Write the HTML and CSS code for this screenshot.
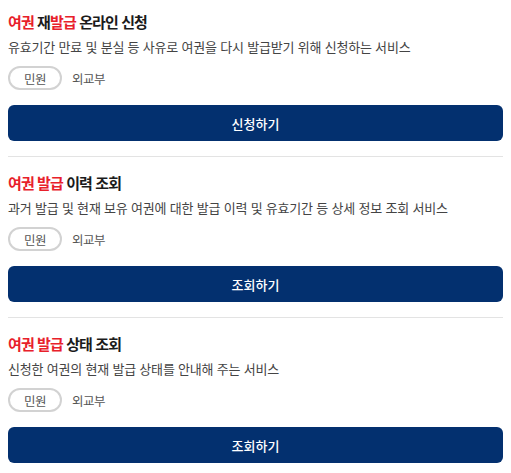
FILE: index.html
```html
<!DOCTYPE html>
<html lang="ko">
  <head>
    <meta charset="UTF-8" />
    <meta name="viewport" content="width=device-width, initial-scale=1.0" />
    <title>여권 민원 서비스</title>
    <link rel="stylesheet" href="styles.css">
  </head>
  <body>
    <div class="service-list">
      <div class="service">
        <h2 class="service-title"><em>여권</em> 재<em>발급</em> 온라인 신청</h2>
        <p class="service-desc">유효기간 만료 및 분실 등 사유로 여권을 다시 발급받기 위해 신청하는 서비스</p>
        <div class="service-meta">
          <span class="badge">민원</span>
          <span class="org">외교부</span>
        </div>
        <button class="service-btn">신청하기</button>
      </div>
      <div class="service">
        <h2 class="service-title"><em>여권 발급</em> 이력 조회</h2>
        <p class="service-desc">과거 발급 및 현재 보유 여권에 대한 발급 이력 및 유효기간 등 상세 정보 조회 서비스</p>
        <div class="service-meta">
          <span class="badge">민원</span>
          <span class="org">외교부</span>
        </div>
        <button class="service-btn">조회하기</button>
      </div>
      <div class="service">
        <h2 class="service-title"><em>여권 발급</em> 상태 조회</h2>
        <p class="service-desc">신청한 여권의 현재 발급 상태를 안내해 주는 서비스</p>
        <div class="service-meta">
          <span class="badge">민원</span>
          <span class="org">외교부</span>
        </div>
        <button class="service-btn">조회하기</button>
      </div>
    </div>
  </body>
</html>
```
FILE: styles.css
```css
* {
  box-sizing: border-box;
  --text-color: #1b1b1b;
  --sub-color: #444;
  --muted-color: #555;
  --border-color: #e3e3e3;
  --accent-color: #e8202a;
  --primary-color: #03306f;
}

body {
  margin: 0;
  padding: 0 8px;
  background: #fff;
  font-family: "Noto Sans CJK KR", "Noto Sans", sans-serif;
  color: var(--text-color);
}

.service {
  display: flex;
  flex-direction: column;
  padding: 16px 0 15px;
  border-bottom: 1px solid var(--border-color);

  &:first-child {
    padding-top: 12px;
  }

  &:last-child {
    border-bottom: none;
  }
}

.service-title {
  margin: 0;
  font-size: 15px;
  line-height: 20px;
  font-weight: 700;
  letter-spacing: -0.9px;

  em {
    font-style: normal;
    color: var(--accent-color);
  }
}

.service-desc {
  margin: 5px 0 0;
  font-size: 13px;
  line-height: 20px;
  letter-spacing: -0.2px;
  color: var(--sub-color);
}

.service-meta {
  display: flex;
  align-items: center;
  gap: 10px;
  margin-top: 9px;
  font-size: 12.5px;
  letter-spacing: -0.5px;
  color: var(--muted-color);
}

.badge {
  display: inline-flex;
  align-items: center;
  justify-content: center;
  width: 54px;
  height: 24px;
  border: 2px solid #d2d2d2;
  border-radius: 12px;
}

.service-btn {
  margin-top: 15px;
  height: 36px;
  border: none;
  border-radius: 6px;
  background: var(--primary-color);
  color: #fff;
  font-family: inherit;
  font-size: 13px;
  font-weight: 500;
}
```
